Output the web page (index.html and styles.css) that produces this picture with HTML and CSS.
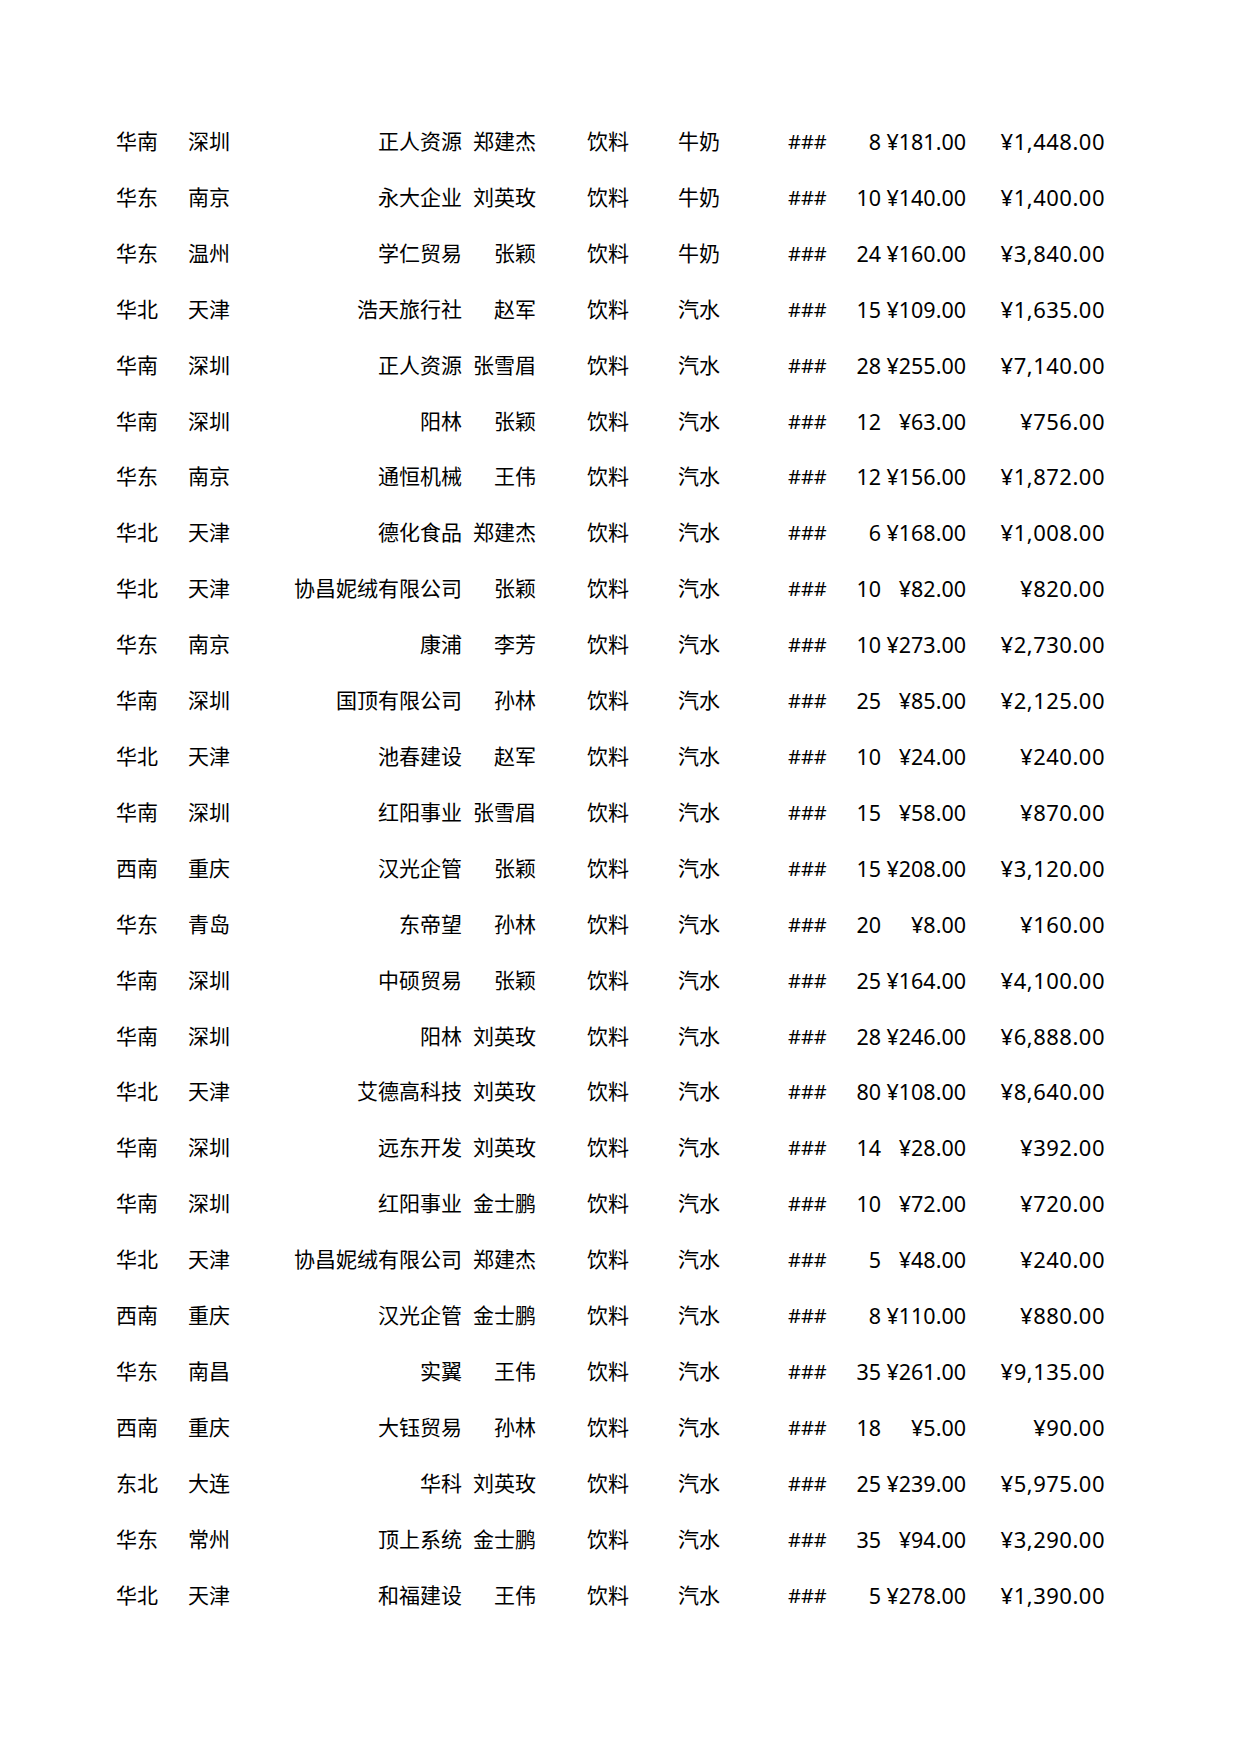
FILE: index.html
```html
<!DOCTYPE html>
<html lang="zh-CN">
<head>
<meta charset="utf-8">
<title>销售数据</title>
<link rel="stylesheet" href="styles.css">
</head>
<body>
<div class="sheet">
<div class="r"><span class="a">华南</span><span class="b">深圳</span><span class="c">正人资源</span><span class="d">郑建杰</span><span class="e">饮料</span><span class="f">牛奶</span><span class="g">###</span><span class="h">8</span><span class="i">¥181.00</span><span class="j">¥1,448.00</span></div>
<div class="r"><span class="a">华东</span><span class="b">南京</span><span class="c">永大企业</span><span class="d">刘英玫</span><span class="e">饮料</span><span class="f">牛奶</span><span class="g">###</span><span class="h">10</span><span class="i">¥140.00</span><span class="j">¥1,400.00</span></div>
<div class="r"><span class="a">华东</span><span class="b">温州</span><span class="c">学仁贸易</span><span class="d">张颖</span><span class="e">饮料</span><span class="f">牛奶</span><span class="g">###</span><span class="h">24</span><span class="i">¥160.00</span><span class="j">¥3,840.00</span></div>
<div class="r"><span class="a">华北</span><span class="b">天津</span><span class="c">浩天旅行社</span><span class="d">赵军</span><span class="e">饮料</span><span class="f">汽水</span><span class="g">###</span><span class="h">15</span><span class="i">¥109.00</span><span class="j">¥1,635.00</span></div>
<div class="r"><span class="a">华南</span><span class="b">深圳</span><span class="c">正人资源</span><span class="d">张雪眉</span><span class="e">饮料</span><span class="f">汽水</span><span class="g">###</span><span class="h">28</span><span class="i">¥255.00</span><span class="j">¥7,140.00</span></div>
<div class="r"><span class="a">华南</span><span class="b">深圳</span><span class="c">阳林</span><span class="d">张颖</span><span class="e">饮料</span><span class="f">汽水</span><span class="g">###</span><span class="h">12</span><span class="i">¥63.00</span><span class="j">¥756.00</span></div>
<div class="r"><span class="a">华东</span><span class="b">南京</span><span class="c">通恒机械</span><span class="d">王伟</span><span class="e">饮料</span><span class="f">汽水</span><span class="g">###</span><span class="h">12</span><span class="i">¥156.00</span><span class="j">¥1,872.00</span></div>
<div class="r"><span class="a">华北</span><span class="b">天津</span><span class="c">德化食品</span><span class="d">郑建杰</span><span class="e">饮料</span><span class="f">汽水</span><span class="g">###</span><span class="h">6</span><span class="i">¥168.00</span><span class="j">¥1,008.00</span></div>
<div class="r"><span class="a">华北</span><span class="b">天津</span><span class="c">协昌妮绒有限公司</span><span class="d">张颖</span><span class="e">饮料</span><span class="f">汽水</span><span class="g">###</span><span class="h">10</span><span class="i">¥82.00</span><span class="j">¥820.00</span></div>
<div class="r"><span class="a">华东</span><span class="b">南京</span><span class="c">康浦</span><span class="d">李芳</span><span class="e">饮料</span><span class="f">汽水</span><span class="g">###</span><span class="h">10</span><span class="i">¥273.00</span><span class="j">¥2,730.00</span></div>
<div class="r"><span class="a">华南</span><span class="b">深圳</span><span class="c">国顶有限公司</span><span class="d">孙林</span><span class="e">饮料</span><span class="f">汽水</span><span class="g">###</span><span class="h">25</span><span class="i">¥85.00</span><span class="j">¥2,125.00</span></div>
<div class="r"><span class="a">华北</span><span class="b">天津</span><span class="c">池春建设</span><span class="d">赵军</span><span class="e">饮料</span><span class="f">汽水</span><span class="g">###</span><span class="h">10</span><span class="i">¥24.00</span><span class="j">¥240.00</span></div>
<div class="r"><span class="a">华南</span><span class="b">深圳</span><span class="c">红阳事业</span><span class="d">张雪眉</span><span class="e">饮料</span><span class="f">汽水</span><span class="g">###</span><span class="h">15</span><span class="i">¥58.00</span><span class="j">¥870.00</span></div>
<div class="r"><span class="a">西南</span><span class="b">重庆</span><span class="c">汉光企管</span><span class="d">张颖</span><span class="e">饮料</span><span class="f">汽水</span><span class="g">###</span><span class="h">15</span><span class="i">¥208.00</span><span class="j">¥3,120.00</span></div>
<div class="r"><span class="a">华东</span><span class="b">青岛</span><span class="c">东帝望</span><span class="d">孙林</span><span class="e">饮料</span><span class="f">汽水</span><span class="g">###</span><span class="h">20</span><span class="i">¥8.00</span><span class="j">¥160.00</span></div>
<div class="r"><span class="a">华南</span><span class="b">深圳</span><span class="c">中硕贸易</span><span class="d">张颖</span><span class="e">饮料</span><span class="f">汽水</span><span class="g">###</span><span class="h">25</span><span class="i">¥164.00</span><span class="j">¥4,100.00</span></div>
<div class="r"><span class="a">华南</span><span class="b">深圳</span><span class="c">阳林</span><span class="d">刘英玫</span><span class="e">饮料</span><span class="f">汽水</span><span class="g">###</span><span class="h">28</span><span class="i">¥246.00</span><span class="j">¥6,888.00</span></div>
<div class="r"><span class="a">华北</span><span class="b">天津</span><span class="c">艾德高科技</span><span class="d">刘英玫</span><span class="e">饮料</span><span class="f">汽水</span><span class="g">###</span><span class="h">80</span><span class="i">¥108.00</span><span class="j">¥8,640.00</span></div>
<div class="r"><span class="a">华南</span><span class="b">深圳</span><span class="c">远东开发</span><span class="d">刘英玫</span><span class="e">饮料</span><span class="f">汽水</span><span class="g">###</span><span class="h">14</span><span class="i">¥28.00</span><span class="j">¥392.00</span></div>
<div class="r"><span class="a">华南</span><span class="b">深圳</span><span class="c">红阳事业</span><span class="d">金士鹏</span><span class="e">饮料</span><span class="f">汽水</span><span class="g">###</span><span class="h">10</span><span class="i">¥72.00</span><span class="j">¥720.00</span></div>
<div class="r"><span class="a">华北</span><span class="b">天津</span><span class="c">协昌妮绒有限公司</span><span class="d">郑建杰</span><span class="e">饮料</span><span class="f">汽水</span><span class="g">###</span><span class="h">5</span><span class="i">¥48.00</span><span class="j">¥240.00</span></div>
<div class="r"><span class="a">西南</span><span class="b">重庆</span><span class="c">汉光企管</span><span class="d">金士鹏</span><span class="e">饮料</span><span class="f">汽水</span><span class="g">###</span><span class="h">8</span><span class="i">¥110.00</span><span class="j">¥880.00</span></div>
<div class="r"><span class="a">华东</span><span class="b">南昌</span><span class="c">实翼</span><span class="d">王伟</span><span class="e">饮料</span><span class="f">汽水</span><span class="g">###</span><span class="h">35</span><span class="i">¥261.00</span><span class="j">¥9,135.00</span></div>
<div class="r"><span class="a">西南</span><span class="b">重庆</span><span class="c">大钰贸易</span><span class="d">孙林</span><span class="e">饮料</span><span class="f">汽水</span><span class="g">###</span><span class="h">18</span><span class="i">¥5.00</span><span class="j">¥90.00</span></div>
<div class="r"><span class="a">东北</span><span class="b">大连</span><span class="c">华科</span><span class="d">刘英玫</span><span class="e">饮料</span><span class="f">汽水</span><span class="g">###</span><span class="h">25</span><span class="i">¥239.00</span><span class="j">¥5,975.00</span></div>
<div class="r"><span class="a">华东</span><span class="b">常州</span><span class="c">顶上系统</span><span class="d">金士鹏</span><span class="e">饮料</span><span class="f">汽水</span><span class="g">###</span><span class="h">35</span><span class="i">¥94.00</span><span class="j">¥3,290.00</span></div>
<div class="r"><span class="a">华北</span><span class="b">天津</span><span class="c">和福建设</span><span class="d">王伟</span><span class="e">饮料</span><span class="f">汽水</span><span class="g">###</span><span class="h">5</span><span class="i">¥278.00</span><span class="j">¥1,390.00</span></div>
</div>
</body>
</html>
```
FILE: styles.css
```css
html, body {
  margin: 0;
  padding: 0;
  background: #ffffff;
}

body {
  width: 1240px;
  height: 1754px;
  color: #000000;
  font-family: "Noto Sans", "Noto Sans CJK SC", sans-serif;
  font-size: 21px;
}

.sheet {
  padding-top: 114px;
  padding-left: 116px;
}

.r {
  display: grid;
  grid-template-columns: 72px 80px 194px 74px 142px 110px 49px 44px 85px 139px;
  height: 55.92px;
  line-height: 55.92px;
  white-space: nowrap;
}

.r > span {
  display: flex;
  min-width: 0;
}

.a, .b, .f, .g {
  justify-content: flex-start;
}

.c, .d, .h, .i, .j {
  justify-content: flex-end;
}

.e {
  justify-content: flex-start;
  padding-left: 51px;
}

.g {
  font-size: 20px;
}

.h, .i {
  font-size: 21.5px;
}

.j {
  font-size: 22px;
  letter-spacing: 0.5px;
}
```
